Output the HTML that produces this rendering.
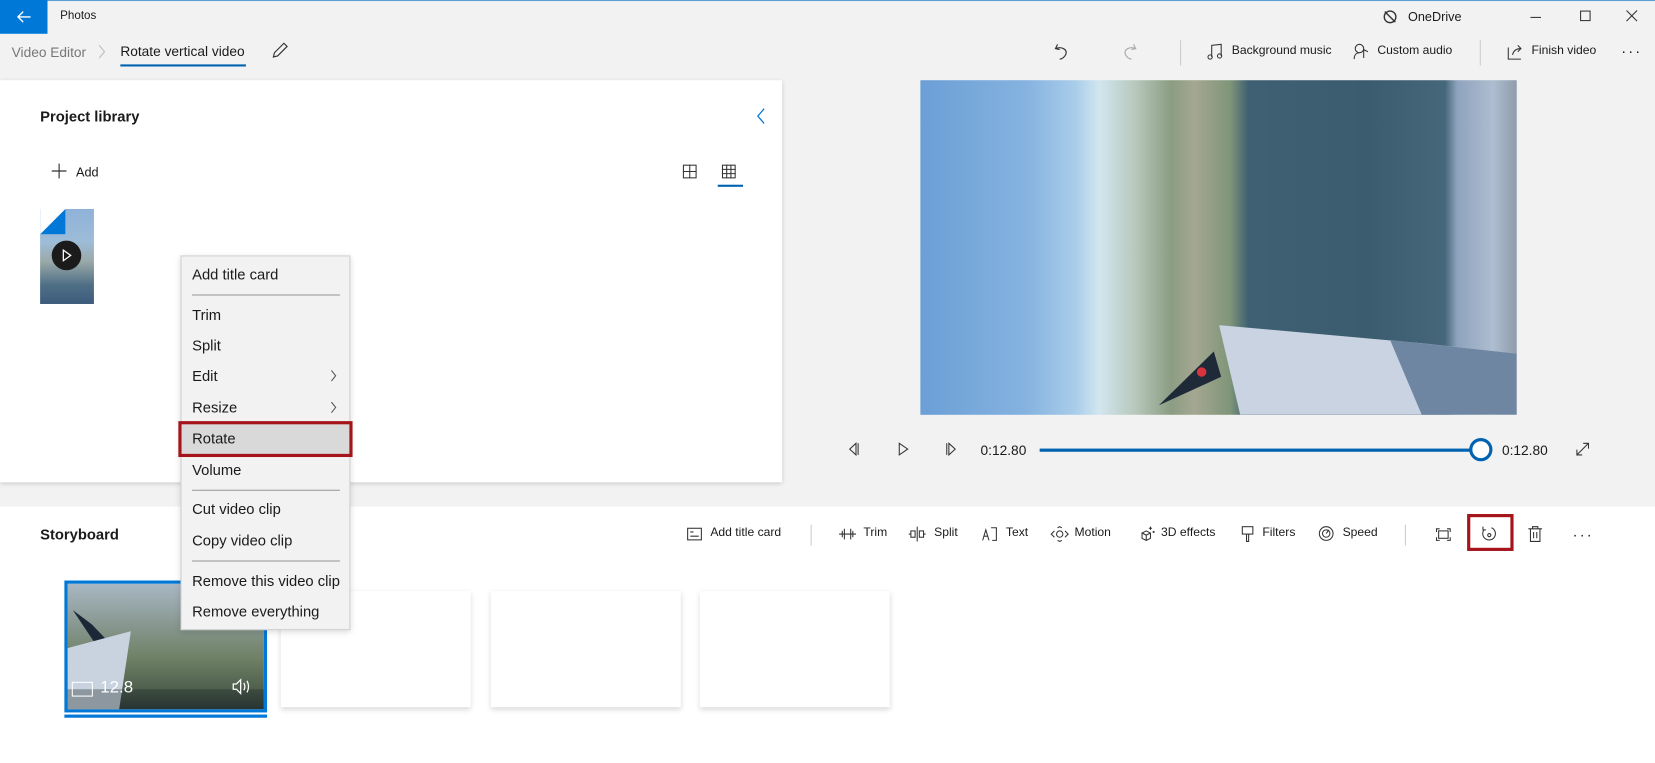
<!DOCTYPE html>
<html><head><meta charset="utf-8"><style>
*{margin:0;padding:0;box-sizing:border-box}
html,body{width:1655px;height:763px;overflow:hidden;background:#f2f2f2}
#r{position:absolute;left:0;top:0;width:1568px;height:723px;transform:scale(1.05548);transform-origin:0 0;font-family:"Liberation Sans",sans-serif;color:#1a1a1a;background:#f2f2f2}
.a{position:absolute;white-space:nowrap}
.t{font-size:11.5px}
.m{font-size:14px}
svg{position:absolute;overflow:visible}
.mi{position:absolute;left:10px;font-size:14px;color:#1a1a1a}
</style></head><body><div id="r">
<div class="a" style="left:0;top:0;width:1568px;height:1px;background:#5a9fd4"></div>
<div class="a" style="left:0;top:0;width:45px;height:32px;background:#0078d7"></div>
<svg style="left:16px;top:10px" width="14" height="12"><path d="M1 6H13M6 1L1 6L6 11" stroke="#fff" stroke-width="1.3" fill="none"/></svg>
<div class="a t" style="left:57px;top:9px;font-size:11px">Photos</div>
<svg style="left:1310px;top:9px" width="14" height="14"><circle cx="7" cy="7" r="5.5" stroke="#333" fill="none" stroke-width="1.3"/><path d="M2 2L12 12" stroke="#333" stroke-width="1.3"/></svg>
<div class="a" style="left:1334px;top:9px;font-size:12px">OneDrive</div>
<div class="a" style="left:1450px;top:16px;width:10px;height:1px;background:#333"></div>
<div class="a" style="left:1497px;top:10px;width:10px;height:10px;border:1px solid #333"></div>
<svg style="left:1541px;top:10px" width="10" height="10"><path d="M0 0L10 10M10 0L0 10" stroke="#333" stroke-width="1"/></svg>

<div class="a m" style="left:11px;top:42px;color:#777;font-size:13px">Video Editor</div>
<svg style="left:93px;top:42px" width="8" height="14"><path d="M1 1L6 7L1 13" stroke="#bbb" fill="none"/></svg>
<div class="a m" style="left:114px;top:41px;font-size:13px">Rotate vertical video</div>
<div class="a" style="left:114px;top:61px;width:119px;height:2px;background:#0063b1"></div>
<svg style="left:257px;top:40px" width="16" height="16"><path d="M2 14L3 10L12 1L15 4L6 13Z" stroke="#333" fill="none" stroke-width="1.1"/></svg>

<svg style="left:999px;top:41px" width="14" height="16"><path d="M3 1L1 5L5 6M1 5C6 3 12 5 11 10C10 13 7 15 5 15" stroke="#333" fill="none" stroke-width="1.1"/></svg>
<svg style="left:1063px;top:41px" width="14" height="16"><path d="M11 1L13 5L9 6M13 5C8 3 2 5 3 10C4 13 7 15 9 15" stroke="#aaa" fill="none" stroke-width="1.1"/></svg>
<div class="a" style="left:1118px;top:38px;width:1px;height:24px;background:#ccc"></div>
<svg style="left:1144px;top:41px" width="14" height="16"><path d="M4 13V2L13 1V12" stroke="#333" fill="none"/><circle cx="2.5" cy="13" r="2" stroke="#333" fill="none"/><circle cx="11.5" cy="12" r="2" stroke="#333" fill="none"/></svg>
<div class="a t" style="left:1167px;top:42px">Background music</div>
<svg style="left:1282px;top:41px" width="16" height="16"><circle cx="6" cy="5" r="4" stroke="#333" fill="none"/><path d="M1 15C1 11 3 9 6 9M10 6V14M10 6L14 8" stroke="#333" fill="none"/></svg>
<div class="a t" style="left:1305px;top:42px">Custom audio</div>
<div class="a" style="left:1402px;top:38px;width:1px;height:24px;background:#ccc"></div>
<svg style="left:1428px;top:41px" width="16" height="16"><path d="M1 4V15H13M5 11C6 7 9 5 13 5M10 2L13 5L10 8" stroke="#333" fill="none"/></svg>
<div class="a t" style="left:1451px;top:42px">Finish video</div>
<div class="a" style="left:1536px;top:40px;font-size:14px;letter-spacing:2px">···</div>

<!-- project library -->
<div class="a" style="left:0;top:76px;width:741px;height:381px;background:#fff;box-shadow:0 1px 4px rgba(0,0,0,.18)"></div>
<div class="a" style="left:38px;top:102px;font-size:14px;font-weight:bold">Project library</div>
<svg style="left:717px;top:102px" width="8" height="16"><path d="M7 1L1 8L7 15" stroke="#0078d7" fill="none" stroke-width="1.2"/></svg>
<svg style="left:49px;top:155px" width="14" height="14"><path d="M7 0V14M0 7H14" stroke="#333" stroke-width="1.1"/></svg>
<div class="a" style="left:72px;top:156px;font-size:12px">Add</div>
<svg style="left:647px;top:156px" width="13" height="13"><rect x=".5" y=".5" width="12" height="12" stroke="#333" fill="none"/><path d="M6.5 0V13M0 6.5H13" stroke="#333"/></svg>
<svg style="left:684px;top:156px" width="13" height="13"><rect x=".5" y=".5" width="12" height="12" stroke="#333" fill="none"/><path d="M4.5 0V13M8.5 0V13M0 4.5H13M0 8.5H13" stroke="#333"/></svg>
<div class="a" style="left:680px;top:175px;width:24px;height:2px;background:#0063b1"></div>
<div class="a" style="left:38px;top:198px;width:51px;height:90px;background:linear-gradient(180deg,#8fb2d8 0%,#9dbcd8 35%,#9aa9a8 55%,#4f6f86 80%,#3d5c7c 100%)"></div>
<div class="a" style="left:38px;top:198px;width:24px;height:24px;background:#fff;clip-path:polygon(0 0,100% 0,0 100%)"></div>
<div class="a" style="left:38px;top:198px;width:24px;height:24px;background:#0078d7;clip-path:polygon(100% 0,100% 100%,0 100%)"></div>
<div class="a" style="left:49px;top:228px;width:28px;height:28px;border-radius:50%;background:#1b1b1b"></div>
<svg style="left:59px;top:236px" width="10" height="12"><path d="M1 1L8 6L1 11Z" stroke="#fff" fill="none" stroke-width="1.2"/></svg>

<!-- video -->
<div class="a" style="left:872px;top:76px;width:565px;height:317px;overflow:hidden;background:linear-gradient(90deg,#6b9fd6 0%,#86b3e0 18%,#a9cdea 26%,#d2e6ef 30%,#b8c8bc 36%,#8b9d83 42%,#a5a791 46%,#7e9578 52%,#3f6073 55%,#3b5c6f 75%,#46677a 88%,#8ea3bd 90%,#aebdd0 96%,#8e9cab 100%)">
<div class="a" style="left:0;top:0;width:565px;height:317px;background:#c9d3e2;clip-path:polygon(283px 232px,473px 249px,565px 259px,565px 317px,303px 317px)"></div>
<div class="a" style="left:0;top:0;width:565px;height:317px;background:#6f86a3;clip-path:polygon(445px 246px,565px 259px,565px 317px,475px 317px)"></div>
<div class="a" style="left:0;top:0;width:565px;height:317px;background:#1e2a38;clip-path:polygon(226px 308px,278px 257px,285px 281px)"></div>
<div class="a" style="left:262px;top:272px;width:9px;height:9px;border-radius:50%;background:#d8343f"></div>
</div>

<svg style="left:803px;top:419px" width="12" height="13"><path d="M8 1L2 6.5L8 12ZM10 1V12" stroke="#333" fill="none"/></svg>
<svg style="left:850px;top:419px" width="12" height="13"><path d="M2 1L10 6.5L2 12Z" stroke="#333" fill="none"/></svg>
<svg style="left:895px;top:419px" width="12" height="13"><path d="M4 1L10 6.5L4 12ZM2 1V12" stroke="#333" fill="none"/></svg>
<div class="a" style="left:929px;top:419px;font-size:13px">0:12.80</div>
<div class="a" style="left:985px;top:425px;width:418px;height:3px;background:#0063b1"></div>
<div class="a" style="left:1392px;top:415px;width:22px;height:22px;border-radius:50%;background:#fff;border:3px solid #0063b1"></div>
<div class="a" style="left:1423px;top:419px;font-size:13px">0:12.80</div>
<svg style="left:1493px;top:419px" width="13" height="13"><path d="M1 12L12 1M7 1H12V6M1 7V12H6" stroke="#333" fill="none"/></svg>

<!-- storyboard -->
<div class="a" style="left:0;top:480px;width:1568px;height:243px;background:#fff"></div>
<div class="a" style="left:38px;top:498px;font-size:14px;font-weight:bold">Storyboard</div>
<svg style="left:651px;top:500px" width="14" height="12"><rect x=".5" y=".5" width="13" height="11" stroke="#333" fill="none"/><path d="M3 8H11M3 4H6" stroke="#333"/></svg>
<div class="a t" style="left:673px;top:499px">Add title card</div>
<div class="a" style="left:768px;top:497px;width:1px;height:20px;background:#ccc"></div>
<svg style="left:795px;top:499px" width="16" height="14"><path d="M0 7H16M5 2V12M11 2V12M3 4V10M13 4V10" stroke="#333" fill="none"/></svg>
<div class="a t" style="left:818px;top:499px">Trim</div>
<svg style="left:861px;top:499px" width="16" height="14"><rect x="2" y="4" width="4" height="6" stroke="#333" fill="none"/><rect x="10" y="4" width="4" height="6" stroke="#333" fill="none"/><path d="M8 0V14M0 7H2M14 7H16" stroke="#333"/></svg>
<div class="a t" style="left:885px;top:499px">Split</div>
<svg style="left:930px;top:499px" width="16" height="14"><path d="M1 13L4 3L7 13M2 9H6M9 1H14V13H10" stroke="#333" fill="none"/></svg>
<div class="a t" style="left:953px;top:499px">Text</div>
<svg style="left:996px;top:499px" width="16" height="14"><circle cx="8" cy="7" r="3" stroke="#333" fill="none"/><path d="M3 4L0 7L3 10M13 4L16 7L13 10M6 1L8 0L10 1M6 13L8 14L10 13" stroke="#333" fill="none"/></svg>
<div class="a t" style="left:1018px;top:499px">Motion</div>
<svg style="left:1079px;top:498px" width="16" height="15"><path d="M3 7L7 5L11 7V12L7 14L3 12ZM3 7L7 9L11 7M7 9V14" stroke="#333" fill="none"/><path d="M11 1V4M9.5 2.5H12.5M14 5V7M13 6H15" stroke="#333"/></svg>
<div class="a t" style="left:1100px;top:499px">3D effects</div>
<svg style="left:1176px;top:498px" width="12" height="16"><rect x="1" y="1" width="10" height="7" stroke="#333" fill="none"/><path d="M5 8V15H7V8" stroke="#333" fill="none"/></svg>
<div class="a t" style="left:1196px;top:499px">Filters</div>
<svg style="left:1249px;top:498px" width="15" height="15"><circle cx="7.5" cy="7.5" r="6.5" stroke="#333" fill="none"/><circle cx="7.5" cy="7.5" r="3.5" stroke="#333" fill="none"/><path d="M7.5 7.5L10 4" stroke="#333"/></svg>
<div class="a t" style="left:1272px;top:499px">Speed</div>
<div class="a" style="left:1331px;top:497px;width:1px;height:20px;background:#ccc"></div>
<svg style="left:1360px;top:500px" width="15" height="13"><path d="M1 4V1H4M11 1H14V4M14 9V12H11M4 12H1V9" stroke="#333" fill="none"/><rect x="3" y="3" width="9" height="7" stroke="#333" fill="none"/></svg>
<div class="a" style="left:1390px;top:487px;width:44px;height:35px;border:3px solid #a5141b"></div>
<svg style="left:1403px;top:498px" width="16" height="16"><path d="M3 4A6 6 0 1 0 10 2M2 1V4H5" stroke="#333" fill="none"/><circle cx="8" cy="9" r="1.5" stroke="#333" fill="none"/></svg>
<svg style="left:1448px;top:498px" width="13" height="16"><path d="M0 3H13M4 3V1H9V3M2 3V15H11V3M5 6V12M8 6V12" stroke="#333" fill="none"/></svg>
<div class="a" style="left:1490px;top:498px;font-size:14px;letter-spacing:2px">···</div>

<div class="a" style="left:61px;top:550px;width:192px;height:125px;border:3px solid #0078d7;background:linear-gradient(180deg,#a8b8c4 0%,#8b9a94 30%,#6e8065 60%,#4d5e4c 85%,#2e3a38 100%);overflow:hidden">
<div class="a" style="left:5px;top:25px;width:60px;height:45px;background:#1c2838;clip-path:polygon(0 0,30% 30%,80% 100%,50% 100%)"></div>
<div class="a" style="left:0;top:45px;width:60px;height:80px;background:#c9d3e0;clip-path:polygon(0 20%,100% 0,80% 100%,0 100%)"></div>
<div class="a" style="left:0;top:100px;width:186px;height:19px;background:rgba(30,40,40,.35)"></div>
</div>
<div class="a" style="left:68px;top:646px;width:20px;height:14px;border:1.5px solid #fff"></div>
<div class="a" style="left:95px;top:643px;font-size:16px;color:#fff">12.8</div>
<svg style="left:220px;top:643px" width="20" height="15"><path d="M1 5H4L8 1V14L4 10H1Z M11 4Q13 7.5 11 11 M14 2Q17 7.5 14 13" stroke="#fff" fill="none" stroke-width="1.2"/></svg>
<div class="a" style="left:61px;top:677px;width:192px;height:3px;background:#0078d7"></div>
<div class="a" style="left:266px;top:560px;width:180px;height:110px;background:#fff;box-shadow:0 2px 5px rgba(0,0,0,.16)"></div>
<div class="a" style="left:465px;top:560px;width:180px;height:110px;background:#fff;box-shadow:0 2px 5px rgba(0,0,0,.16)"></div>
<div class="a" style="left:663px;top:560px;width:180px;height:110px;background:#fff;box-shadow:0 2px 5px rgba(0,0,0,.16)"></div>

<!-- context menu -->
<div class="a" style="left:171px;top:242px;width:161px;height:355px;background:#f2f2f2;border:1px solid #d0d0d0;box-shadow:0 2px 6px rgba(0,0,0,.15)">
<div class="mi" style="top:9px">Add title card</div>
<div class="a" style="left:10px;top:36px;width:140px;height:1px;background:#999"></div>
<div class="mi" style="top:47px">Trim</div>
<div class="mi" style="top:76px">Split</div>
<div class="mi" style="top:105px">Edit</div>
<svg style="left:141px;top:107px" width="6" height="12"><path d="M1 1L5 6L1 11" stroke="#555" fill="none"/></svg>
<div class="mi" style="top:135px">Resize</div>
<svg style="left:141px;top:137px" width="6" height="12"><path d="M1 1L5 6L1 11" stroke="#555" fill="none"/></svg>
<div class="a" style="left:-3px;top:156px;width:165px;height:34px;background:#d9d9d9;border:3px solid #a5141b"></div>
<div class="mi" style="top:164px">Rotate</div>
<div class="mi" style="top:194px">Volume</div>
<div class="a" style="left:10px;top:221px;width:140px;height:1px;background:#999"></div>
<div class="mi" style="top:231px">Cut video clip</div>
<div class="mi" style="top:261px">Copy video clip</div>
<div class="a" style="left:10px;top:288px;width:140px;height:1px;background:#999"></div>
<div class="mi" style="top:299px">Remove this video clip</div>
<div class="mi" style="top:328px">Remove everything</div>
</div>
</div></body></html>
